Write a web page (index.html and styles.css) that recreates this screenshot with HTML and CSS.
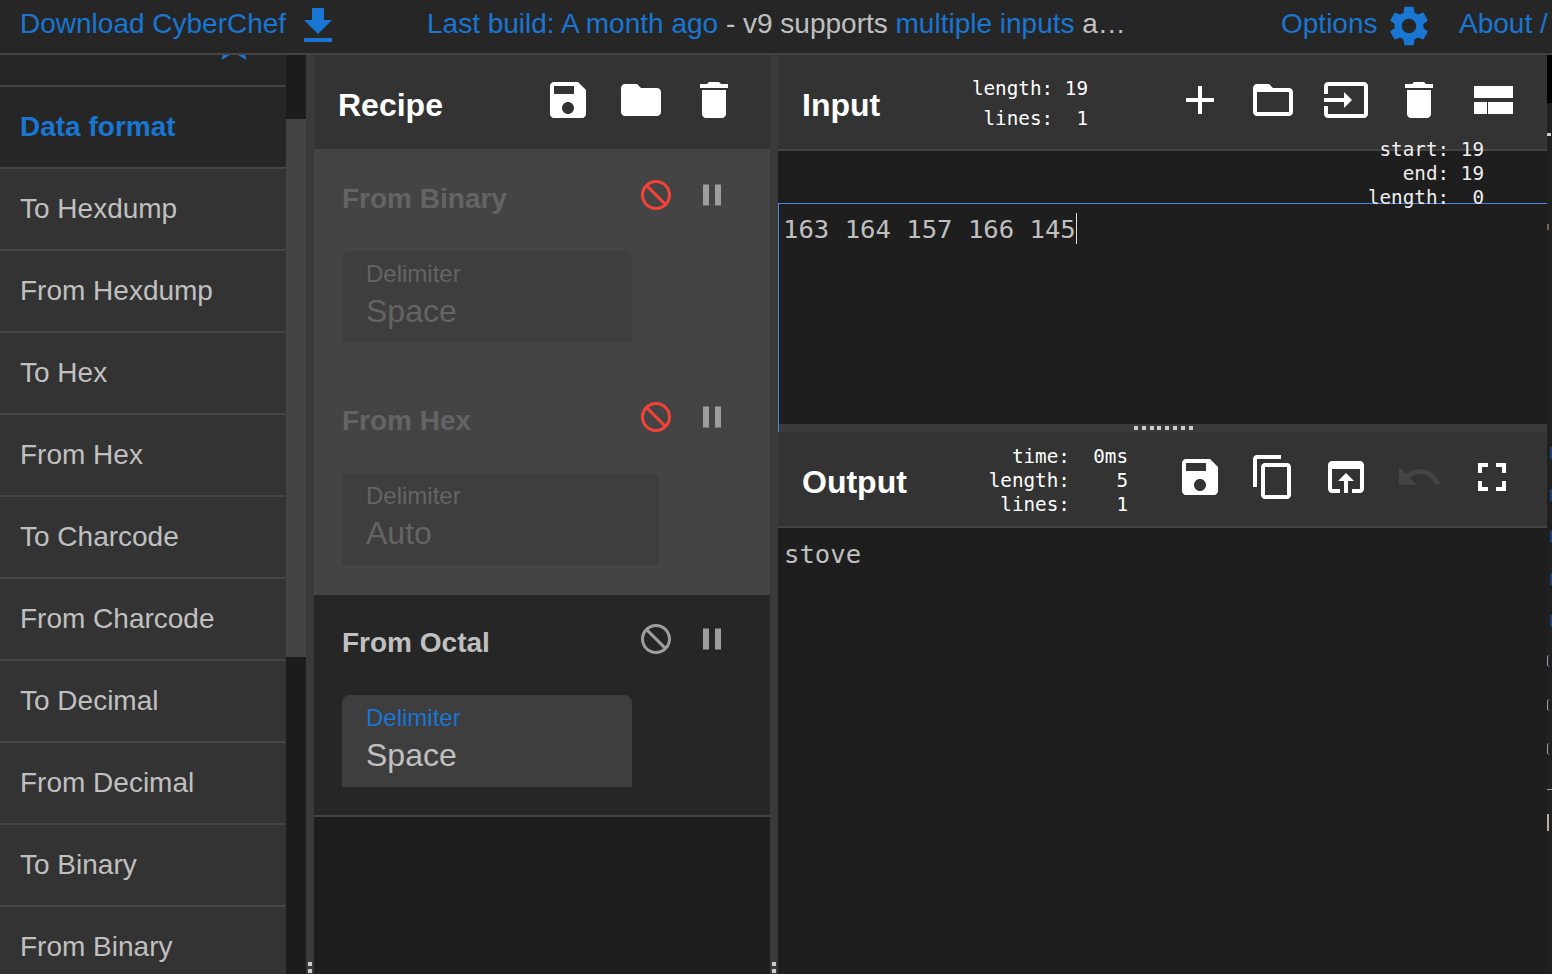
FILE: index.html
```html
<!DOCTYPE html>
<html lang="en">
<head>
    <meta charset="UTF-8">
    <title>CyberChef</title>
    <link rel="stylesheet" href="styles.css">
</head>
<body>
    <header class="top-bar">
        <a class="top-link download">Download CyberChef
            <svg class="icon" viewBox="0 0 24 24"><path d="M19 9h-4V3H9v6H5l7 7 7-7zM5 18v2h14v-2H5z"/></svg>
        </a>
        <div class="notice"><a>Last build: A month ago</a> - v9 supports <a>multiple inputs</a> a…</div>
        <a class="top-link options">Options
            <svg class="icon" viewBox="0 0 24 24"><path d="M19.14 12.94c.04-.3.06-.61.06-.94 0-.32-.02-.64-.07-.94l2.03-1.58c.18-.14.23-.41.12-.61l-1.92-3.32c-.12-.22-.37-.29-.59-.22l-2.39.96c-.5-.38-1.03-.7-1.62-.94l-.36-2.54c-.04-.24-.24-.41-.48-.41h-3.84c-.24 0-.43.17-.47.41l-.36 2.54c-.59.24-1.13.57-1.62.94l-2.39-.96c-.22-.08-.47 0-.59.22L2.74 8.87c-.12.21-.08.47.12.61l2.03 1.58c-.05.3-.09.63-.09.94s.02.64.07.94l-2.03 1.58c-.18.14-.23.41-.12.61l1.92 3.32c.12.22.37.29.59.22l2.39-.96c.5.38 1.03.7 1.62.94l.36 2.54c.05.24.24.41.48.41h3.84c.24 0 .44-.17.47-.41l.36-2.54c.59-.24 1.13-.56 1.62-.94l2.39.96c.22.08.47 0 .59-.22l1.92-3.32c.12-.22.07-.47-.12-.61l-2.01-1.58zM12 15.6c-1.98 0-3.6-1.62-3.6-3.6s1.62-3.6 3.6-3.6 3.6 1.62 3.6 3.6-1.62 3.6-3.6 3.6z"/></svg>
        </a>
        <a class="top-link about">About /</a>
    </header>

    <main class="app">
        <!-- Operations -->
        <section class="ops-panel">
            <div class="ops-list">
                <div class="ops-fav">
                    <svg class="icon star" viewBox="0 0 24 24"><path d="M12 17.27L18.18 21l-1.64-7.03L22 9.24l-7.19-.61L12 2 9.19 8.63 2 9.24l5.46 4.73L5.82 21z"/></svg>
                </div>
                <div class="ops-category">Data format</div>
                <div class="op-item">To Hexdump</div>
                <div class="op-item">From Hexdump</div>
                <div class="op-item">To Hex</div>
                <div class="op-item">From Hex</div>
                <div class="op-item">To Charcode</div>
                <div class="op-item">From Charcode</div>
                <div class="op-item">To Decimal</div>
                <div class="op-item">From Decimal</div>
                <div class="op-item">To Binary</div>
                <div class="op-item">From Binary</div>
            </div>
            <div class="ops-scroll"><div class="ops-thumb"></div></div>
        </section>

        <div class="gutter"><div class="grip-v"></div></div>

        <!-- Recipe -->
        <section class="recipe-panel">
            <div class="panel-head">
                <h2 class="panel-title">Recipe</h2>
                <div class="tools">
                    <svg class="icon" viewBox="0 0 24 24"><path d="M17 3H5c-1.11 0-2 .9-2 2v14c0 1.1.89 2 2 2h14c1.1 0 2-.9 2-2V7l-4-4zm-5 16c-1.66 0-3-1.34-3-3s1.34-3 3-3 3 1.34 3 3-1.34 3-3 3zm3-10H5V5h10v4z"/></svg>
                    <svg class="icon" viewBox="0 0 24 24"><path d="M10 4H4c-1.1 0-1.99.9-1.99 2L2 18c0 1.1.9 2 2 2h16c1.1 0 2-.9 2-2V8c0-1.1-.9-2-2-2h-8l-2-2z"/></svg>
                    <svg class="icon" viewBox="0 0 24 24"><path d="M6 19c0 1.1.9 2 2 2h8c1.1 0 2-.9 2-2V7H6v12zM19 4h-3.5l-1-1h-5l-1 1H5v2h14V4z"/></svg>
                </div>
            </div>

            <div class="rec-op disabled">
                <div class="rec-head">
                    <span class="rec-name">From Binary</span>
                    <svg class="rec-icon block" viewBox="0 0 24 24"><path d="M12 2C6.48 2 2 6.48 2 12s4.48 10 10 10 10-4.48 10-10S17.52 2 12 2zM20 12c0 1.85-.63 3.55-1.69 4.9L7.1 5.69C8.45 4.63 10.15 4 12 4c4.42 0 8 3.58 8 8zM4 12c0-1.85.63-3.55 1.69-4.9L16.9 18.31C15.55 19.37 13.85 20 12 20c-4.42 0-8-3.58-8-8z"/></svg>
                    <svg class="rec-icon pause" viewBox="0 0 24 24"><path d="M6 19h4V5H6v14zm8-14v14h4V5h-4z"/></svg>
                </div>
                <div class="ingredient">
                    <label class="ing-label">Delimiter</label>
                    <div class="ing-value">Space</div>
                </div>
            </div>

            <div class="rec-op disabled">
                <div class="rec-head">
                    <span class="rec-name">From Hex</span>
                    <svg class="rec-icon block" viewBox="0 0 24 24"><path d="M12 2C6.48 2 2 6.48 2 12s4.48 10 10 10 10-4.48 10-10S17.52 2 12 2zM20 12c0 1.85-.63 3.55-1.69 4.9L7.1 5.69C8.45 4.63 10.15 4 12 4c4.42 0 8 3.58 8 8zM4 12c0-1.85.63-3.55 1.69-4.9L16.9 18.31C15.55 19.37 13.85 20 12 20c-4.42 0-8-3.58-8-8z"/></svg>
                    <svg class="rec-icon pause" viewBox="0 0 24 24"><path d="M6 19h4V5H6v14zm8-14v14h4V5h-4z"/></svg>
                </div>
                <div class="ingredient wide">
                    <label class="ing-label">Delimiter</label>
                    <div class="ing-value">Auto</div>
                </div>
            </div>

            <div class="rec-op active">
                <div class="rec-head">
                    <span class="rec-name">From Octal</span>
                    <svg class="rec-icon block" viewBox="0 0 24 24"><path d="M12 2C6.48 2 2 6.48 2 12s4.48 10 10 10 10-4.48 10-10S17.52 2 12 2zM20 12c0 1.85-.63 3.55-1.69 4.9L7.1 5.69C8.45 4.63 10.15 4 12 4c4.42 0 8 3.58 8 8zM4 12c0-1.85.63-3.55 1.69-4.9L16.9 18.31C15.55 19.37 13.85 20 12 20c-4.42 0-8-3.58-8-8z"/></svg>
                    <svg class="rec-icon pause" viewBox="0 0 24 24"><path d="M6 19h4V5H6v14zm8-14v14h4V5h-4z"/></svg>
                </div>
                <div class="ingredient">
                    <label class="ing-label">Delimiter</label>
                    <div class="ing-value">Space</div>
                </div>
            </div>
        </section>

        <div class="gutter"><div class="grip-v"></div></div>

        <!-- Input and output -->
        <section class="io-panel">
            <div class="input-part">
                <div class="panel-head io-head">
                    <h2 class="panel-title">Input</h2>
                    <pre class="stats input-stats">length: 19
lines:  1</pre>
                    <div class="tools">
                        <svg class="icon" viewBox="0 0 24 24"><path d="M19 13h-6v6h-2v-6H5v-2h6V5h2v6h6v2z"/></svg>
                        <svg class="icon" viewBox="0 0 24 24"><path d="M20 6h-8l-2-2H4c-1.1 0-1.99.9-1.99 2L2 18c0 1.1.9 2 2 2h16c1.1 0 2-.9 2-2V8c0-1.1-.9-2-2-2zm0 12H4V8h16v10z"/></svg>
                        <svg class="icon" viewBox="0 0 24 24"><path d="M21 3.01H3c-1.1 0-2 .9-2 2V9h2V4.99h18v14.03H3V15H1v4.01c0 1.1.9 1.98 2 1.98h18c1.1 0 2-.88 2-1.98v-14c0-1.11-.9-2-2-2zM11 16l4-4-4-4v3H1v2h10v3z"/></svg>
                        <svg class="icon" viewBox="0 0 24 24"><path d="M6 19c0 1.1.9 2 2 2h8c1.1 0 2-.9 2-2V7H6v12zM19 4h-3.5l-1-1h-5l-1 1H5v2h14V4z"/></svg>
                        <svg class="icon" viewBox="0 0 24 24"><path d="M3 5h19.500v6H3zM3 13h6.500v6H3zM10 13h12.500v6H10z"/></svg>
                    </div>
                </div>
                <pre class="stats selection-stats">start: 19
end: 19
length:  0</pre>
                <div class="input-body">
                    <div class="code-text">163 164 157 166 145<span class="caret"></span></div>
                </div>
                <div class="gutter-h"><div class="grip-h"></div></div>
            </div>

            <div class="output-part">
                <div class="panel-head io-head">
                    <h2 class="panel-title">Output</h2>
                    <pre class="stats output-stats">time:  0ms
length:    5
lines:    1</pre>
                    <div class="tools">
                        <svg class="icon" viewBox="0 0 24 24"><path d="M17 3H5c-1.11 0-2 .9-2 2v14c0 1.1.89 2 2 2h14c1.1 0 2-.9 2-2V7l-4-4zm-5 16c-1.66 0-3-1.34-3-3s1.34-3 3-3 3 1.34 3 3-1.34 3-3 3zm3-10H5V5h10v4z"/></svg>
                        <svg class="icon" viewBox="0 0 24 24"><path d="M16 1H4c-1.1 0-2 .9-2 2v14h2V3h12V1zm3 4H8c-1.1 0-2 .9-2 2v14c0 1.1.9 2 2 2h11c1.1 0 2-.9 2-2V7c0-1.1-.9-2-2-2zm0 16H8V7h11v14z"/></svg>
                        <svg class="icon" viewBox="0 0 24 24"><path d="M19 4H5c-1.11 0-2 .9-2 2v12c0 1.1.89 2 2 2h4v-2H5V8h14v10h-4v2h4c1.1 0 2-.9 2-2V6c0-1.1-.89-2-2-2zm-7 6l-4 4h3v6h2v-6h3l-4-4z"/></svg>
                        <svg class="icon dim" viewBox="0 0 24 24"><path d="M12.500 8c-2.650 0-5.050.99-6.900 2.600L2 7v9h9l-3.620-3.620c1.390-1.160 3.160-1.880 5.120-1.880 3.540 0 6.550 2.310 7.600 5.500l2.370-.78C21.080 11.030 17.150 8 12.500 8z"/></svg>
                        <svg class="icon" viewBox="0 0 24 24"><path d="M7 14H5v5h5v-2H7v-3zm-2-4h2V7h3V5H5v5zm12 7h-3v2h5v-5h-2v3zM14 5v2h3v3h2V5h-5z"/></svg>
                    </div>
                </div>
                <div class="output-body">
                    <div class="code-text">stove</div>
                </div>
            </div>
        </section>

        <!-- Edge of the next panel, mostly cut off -->
        <aside class="edge">
            <div class="edge-bar"></div>
            <div class="edge-tick"></div>
            <div class="edge-brown"></div>
            <div class="edge-blue first"></div>
            <div class="edge-blue"></div>
            <div class="edge-blue"></div>
            <div class="edge-blue"></div>
            <div class="edge-blue"></div>
            <div class="edge-round first"></div>
            <div class="edge-round"></div>
            <div class="edge-round"></div>
            <div class="edge-line"></div>
            <div class="edge-tab"></div>
        </aside>
    </main>
</body>
</html>
```

FILE: styles.css
```css
/* Reset CSS */
* {
    margin: 0;
    padding: 0;
    box-sizing: border-box;
}

html, body {
    height: 100%;
    overflow: hidden;
}

body {
    font-family: 'Liberation Sans', Arial, sans-serif;
    background-color: #1e1e1e;
    color: #c0c0c0;
}

a {
    color: #1976d2;
}

.icon {
    width: 48px;
    height: 48px;
    fill: #fff;
    flex: none;
}

/* Top bar */
.top-bar {
    display: flex;
    align-items: center;
    height: 55px;
    padding-bottom: 5px;
    padding-left: 20px;
    background-color: #262626;
    border-bottom: 2px solid #444;
    font-size: 28px;
    white-space: nowrap;
    overflow: hidden;
}

.top-link {
    display: flex;
    align-items: center;
    flex: none;
}

.top-link .icon {
    fill: #1976d2;
    margin: 4px 0 0 8px;
}

.download {
    width: 407px;
}

.notice {
    width: 854px;
    flex: none;
}

.options {
    width: 178px;
}

.options .icon {
    margin-left: 7px;
}

/* Operations */
.app {
    display: flex;
    height: 919px;
}

.ops-panel {
    display: flex;
    width: 306px;
    flex: none;
    overflow: hidden;
}

.ops-list {
    width: 286px;
    background-color: #333;
}

.ops-fav {
    height: 32px;
    padding-left: 210px;
    background-color: #262626;
    border-bottom: 2px solid #444;
    overflow: hidden;
}

.star {
    display: block;
    margin-top: -37px;
    fill: #1976d2;
}

.ops-category,
.op-item {
    display: flex;
    align-items: center;
    height: 82px;
    padding-left: 20px;
    border-bottom: 2px solid #444;
    font-size: 28px;
}

.ops-category {
    background-color: #262626;
    color: #1976d2;
    font-weight: bold;
}

.ops-scroll {
    width: 20px;
    background-color: #1c1c1c;
}

.ops-thumb {
    height: 538px;
    margin-top: 64px;
    background-color: #444;
}

.gutter {
    display: flex;
    align-items: flex-end;
    width: 8px;
    flex: none;
    background-color: #3a3a3a;
}

.grip-v {
    width: 4px;
    height: 12px;
    margin-left: 2px;
    background: repeating-linear-gradient(to bottom, #ccc 0 4px, #3a3a3a 4px 7px);
}

/* Recipe */
.recipe-panel {
    width: 456px;
    flex: none;
}

.panel-head {
    display: flex;
    align-items: center;
    height: 94px;
    padding-left: 24px;
    background-color: #333;
}

.panel-title {
    margin-top: 6px;
    font-size: 32px;
    font-weight: bold;
    color: #fff;
}

.tools {
    display: flex;
    gap: 25px;
    margin-left: auto;
    margin-right: 32px;
    margin-top: -4px;
}

.rec-op {
    height: 222px;
    padding: 28px 0 0 28px;
    border-bottom: 2px solid #444;
}

.rec-op.disabled {
    background-color: #444;
    color: #646464;
}

.rec-op.active {
    height: 224px;
    background-color: #262626;
    border-top: 2px solid #444;
    padding-top: 26px;
}

.rec-head {
    display: flex;
    align-items: center;
    height: 36px;
    margin-bottom: 38px;
}

.rec-name {
    width: 296px;
    padding-top: 8px;
    font-size: 28px;
    font-weight: bold;
}

.rec-icon {
    width: 36px;
    height: 36px;
}

.block {
    margin-right: 20px;
}

.disabled .block {
    fill: #f44336;
}

.active .block,
.pause {
    fill: #9e9e9e;
}

.ingredient {
    width: 290px;
    height: 92px;
    padding: 9px 0 0 24px;
    background-color: #3e3e3e;
    border-radius: 8px 8px 0 0;
}

.ingredient.wide {
    width: 317px;
}

.ing-label {
    display: block;
    font-size: 24px;
    line-height: 28px;
}

.active .ing-label {
    color: #1976d2;
}

.ing-value {
    margin-top: 3px;
    font-size: 32px;
    line-height: 40px;
}

/* Input and output */
.io-panel {
    display: flex;
    flex-direction: column;
    width: 769px;
    flex: none;
}

.input-part {
    position: relative;
    display: flex;
    flex-direction: column;
    height: 377px;
}

.io-head {
    flex: none;
}

.input-part .io-head {
    border-bottom: 2px solid #444;
    height: 96px;
}

.stats {
    font-family: 'DejaVu Sans Mono', monospace;
    font-size: 19.300px;
    color: #fff;
    text-align: right;
}

.input-stats {
    margin-left: auto;
    margin-top: 4px;
    line-height: 30px;
}

.input-stats + .tools {
    margin-left: 88px;
    margin-right: 31px;
}

.output-stats {
    margin-left: auto;
    margin-top: 4px;
    line-height: 24px;
}

.output-part .tools {
    margin-left: 48px;
    margin-right: 31px;
    margin-top: -4px;
}

/* Floats over the bottom of the input header */
.selection-stats {
    position: absolute;
    top: 83px;
    right: 63px;
    line-height: 24px;
    color: #eee;
}

.input-body {
    flex: 1;
    margin-top: 52px;
    padding: 8px 0 0 5px;
    border-top: 1px solid #4a86e0;
}

.input-part::before {
    content: "";
    position: absolute;
    top: 148px;
    bottom: 0;
    left: 0;
    width: 1px;
    background-color: #4a86e0;
}

.code-text {
    font-family: 'DejaVu Sans Mono', monospace;
    font-size: 25.600px;
    line-height: 34px;
    color: #c0c0c0;
}

.caret {
    display: inline-block;
    width: 1px;
    height: 31px;
    vertical-align: -6px;
    background-color: #ddd;
}

.gutter-h {
    display: flex;
    justify-content: center;
    flex: none;
    height: 8px;
    margin-left: 1px;
    background-color: #3a3a3a;
}

.grip-h {
    width: 61px;
    height: 4px;
    margin-top: 2px;
    margin-left: 2px;
    background: repeating-linear-gradient(to right, #ccc 0 4px, #3a3a3a 4px 7.800px);
}

.output-part .io-head {
    height: 96px;
    border-bottom: 2px solid #444;
}

.output-part {
    flex: 1;
}

.output-body {
    padding: 9px 0 0 6px;
}

.dim {
    fill: #444;
}

/* Right edge */
.edge {
    display: flex;
    flex-direction: column;
    flex: 1;
    overflow: hidden;
    background-color: #202020;
}

.edge-bar {
    height: 48px;
    background-color: #000;
}

.edge-tick {
    width: 4px;
    height: 3px;
    margin-top: 30px;
    background-color: #ccc;
}

.edge-brown {
    width: 2px;
    height: 6px;
    margin-top: 88px;
    background-color: #7a6345;
}

.edge-blue {
    width: 2px;
    height: 12px;
    margin: 30px 0 0 3px;
    background-color: #1b3f73;
}

.edge-blue.first {
    margin-top: 217px;
}

.edge-round {
    width: 3px;
    height: 12px;
    margin-top: 32px;
    border-left: 1px solid #9ab;
    border-radius: 3px 0 0 3px;
}

.edge-round.first {
    margin-top: 28px;
}

.edge-line {
    height: 1px;
    margin-top: 34px;
    background-color: #aaa;
}

.edge-tab {
    height: 17px;
    margin-top: 24px;
    border-left: 2px solid #b8b09c;
}
```
